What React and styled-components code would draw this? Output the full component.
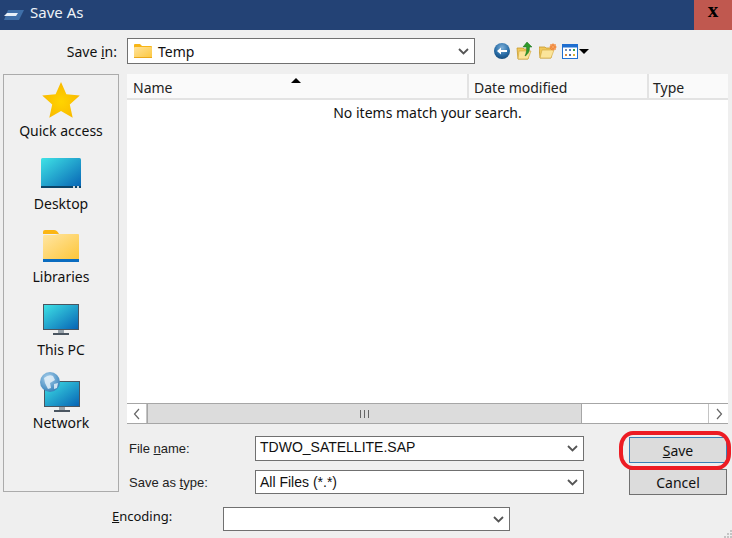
import React from 'react';
import styled, { createGlobalStyle } from 'styled-components';

const GlobalStyle = createGlobalStyle`
  html, body { margin: 0; padding: 0; background: #efefef; }
  body { font-family: "Noto Sans", "Open Sans", sans-serif; color: #111; overflow: hidden; }
`;

const Window = styled.div`
  position: relative;
  width: 732px;
  height: 538px;
  background: #efefef;
  overflow: hidden;
`;

const TitleBar = styled.div`
  display: flex;
  align-items: center;
  height: 30px;
  padding-left: 4px;
  background: #234275;
`;

const TitleText = styled.div`
  margin-left: 6px;
  margin-top: -6px;
  font-size: 15px;
  color: #eef2f7;
`;

const CloseButton = styled.div`
  display: flex;
  align-items: center;
  justify-content: center;
  width: 38px;
  height: 30px;
  margin-left: auto;
  padding-bottom: 9px;
  box-sizing: border-box;
  background: #c0584f;
  font-family: "Liberation Serif", serif;
  font-weight: 700;
  font-size: 21px;
  line-height: 1;
  color: #000;
`;

const Body = styled.div`
  padding: 8px 4px 0 3px;
`;

const TopRow = styled.div`
  display: flex;
  align-items: center;
  height: 26px;
  margin-bottom: 10px;
`;

const TopLabel = styled.div`
  width: 114px;
  text-align: right;
  font-size: 14px;
`;

const ComboBox = styled.div`
  display: flex;
  align-items: center;
  box-sizing: border-box;
  width: ${p => p.$width}px;
  height: ${p => p.$height}px;
  margin-left: ${p => p.$left || 0}px;
  padding: 0 ${p => p.$padRight || 4}px 0 ${p => p.$padLeft || 4}px;
  background: #fff;
  border: 1px solid #707070;
  font-family: ${p => p.$arial ? '"Liberation Sans", sans-serif' : 'inherit'};
  font-size: 14px;
`;

const ComboText = styled.span`
  flex: 1;
  white-space: nowrap;
  margin-top: ${p => p.$up ? -3 : 0}px;
`;

const Toolbar = styled.div`
  display: flex;
  align-items: center;
  gap: 5px;
  margin-left: 18px;
`;

const Main = styled.div`
  display: flex;
  gap: 8px;
`;

const Sidebar = styled.div`
  box-sizing: border-box;
  width: 116px;
  height: 418px;
  padding-top: 3px;
  border: 1px solid #ababab;
  background: #f0f0f0;
`;

const Place = styled.div`
  display: flex;
  flex-direction: column;
  align-items: center;
  height: 73px;
`;

const PlaceIcon = styled.div`
  display: flex;
  align-items: center;
  justify-content: center;
  height: 40px;
  margin-top: 2px;
`;

const PlaceLabel = styled.div`
  margin-top: 1px;
  font-size: 14px;
  line-height: 19px;
`;

const RightColumn = styled.div`
  flex: 1;
  min-width: 0;
`;

const FileList = styled.div`
  display: flex;
  flex-direction: column;
  height: 350px;
  background: #fff;
`;

const ListHeader = styled.div`
  display: flex;
  flex: none;
  height: 26px;
  box-sizing: border-box;
  border-bottom: 2px solid #e3e3e3;
  background: #e3e3e3;
  gap: 2px;
`;

const HeaderCell = styled.div`
  position: relative;
  display: flex;
  align-items: center;
  box-sizing: border-box;
  width: ${p => p.$width}px;
  padding-left: ${p => p.$pad}px;
  padding-top: 3px;
  background: #fafafa;
  font-size: 14px;
  color: #222;
`;

const SortArrow = styled.div`
  position: absolute;
  left: 164px;
  top: 4px;
  width: 0;
  height: 0;
  border-left: 5px solid transparent;
  border-right: 5px solid transparent;
  border-bottom: 5px solid #000;
`;

const EmptyNote = styled.div`
  flex: 1;
  padding-top: 3px;
  text-align: center;
  font-size: 14px;
  line-height: 19px;
`;

const ScrollBar = styled.div`
  display: flex;
  flex: none;
  height: 21px;
  box-sizing: border-box;
  border-top: 1px solid #a6a6a6;
  border-bottom: 1px solid #a6a6a6;
  background: #fff;
`;

const ScrollButton = styled.div`
  display: flex;
  align-items: center;
  justify-content: center;
  width: 20px;
  box-sizing: border-box;
  border-${p => p.$side}: 1px solid #c4c4c4;
`;

const ScrollThumb = styled.div`
  display: flex;
  align-items: center;
  justify-content: center;
  width: 435px;
  background: #dcdcdc;
  border-left: 1px solid #a6a6a6;
  border-right: 1px solid #a6a6a6;
  box-sizing: border-box;
`;

const Grip = styled.div`
  width: 9px;
  height: 8px;
  background: repeating-linear-gradient(90deg, #666 0 1px, transparent 1px 4px);
`;

const ScrollTrack = styled.div`
  flex: 1;
`;

const FormArea = styled.div`
  display: flex;
  margin-top: 12px;
`;

const Fields = styled.div`
  width: 457px;
  margin-right: 45px;
`;

const FieldRow = styled.div`
  display: flex;
  align-items: center;
  height: ${p => p.$height}px;
  margin-bottom: ${p => p.$gap || 0}px;
`;

const FieldLabel = styled.div`
  width: 128px;
  padding-left: 2px;
  box-sizing: border-box;
  font-family: "Liberation Sans", sans-serif;
  font-size: 13px;
  color: #222;
`;

const Actions = styled.div`
  position: relative;
  display: flex;
  flex-direction: column;
  gap: 6px;
  padding-top: 1px;
`;

const ActionButton = styled.div`
  display: flex;
  align-items: center;
  justify-content: center;
  box-sizing: border-box;
  width: 98px;
  height: ${p => p.$height}px;
  background: #dcdcdc;
  border: 1px solid ${p => p.$focus ? '#3a7fb5' : '#707070'};
  font-size: 14px;
`;

const Highlight = styled.div`
  position: absolute;
  left: -10px;
  top: -5px;
  width: 112px;
  height: 39px;
  box-sizing: border-box;
  border: 4px solid #ed1c24;
  border-radius: 14px / 16px;
`;

const EncodingRow = styled.div`
  display: flex;
  align-items: center;
  height: 24px;
  margin-top: 12px;
  padding-left: 109px;
`;

const EncodingLabel = styled.div`
  width: 111px;
  font-size: 13px;
  margin-top: -7px;
`;

const SizeGrip = styled.svg`
  position: absolute;
  right: 0;
  bottom: 0;
`;

const Chevron = () => (
  <svg width="11" height="7" viewBox="0 0 11 7">
    <path d="M1 1l4.5 4.5L10 1" fill="none" stroke="#555" strokeWidth="1.8" />
  </svg>
);

const AppIcon = () => (
  <svg width="20" height="10" viewBox="0 0 20 10">
    <path d="M4 0h16l-5 10H0z" fill="#3f6fa8" />
    <path d="M3 3h11l-2 3H0z" fill="#e8f0f8" />
  </svg>
);

const SmallFolder = () => (
  <svg width="18" height="14" viewBox="0 0 18 14" style={{ marginRight: 6 }}>
    <defs>
      <linearGradient id="sf" x1="0" y1="0" x2="1" y2="1">
        <stop offset="0" stopColor="#ffe29a" />
        <stop offset="1" stopColor="#fcc73e" />
      </linearGradient>
    </defs>
    <path d="M0 1q0-1 1-1h5l2 2h9q1 0 1 1v1H0z" fill="#f8b516" />
    <rect x="0" y="3" width="18" height="11" rx="1" fill="url(#sf)" />
    <rect x="0" y="13" width="18" height="1" fill="#eaa81c" />
  </svg>
);

const BackIcon = () => (
  <svg width="18" height="18" viewBox="0 0 18 18">
    <defs>
      <radialGradient id="bk" cx="0.5" cy="0.3" r="0.8">
        <stop offset="0" stopColor="#7fb0d8" />
        <stop offset="0.55" stopColor="#2a6ea8" />
        <stop offset="1" stopColor="#0f3f6c" />
      </radialGradient>
    </defs>
    <circle cx="9" cy="9" r="8" fill="url(#bk)" />
    <path d="M4 9l4-3.5V8h6v2H8v2.500z" fill="#fff" />
  </svg>
);

const FolderUpIcon = () => (
  <svg width="18" height="18" viewBox="0 0 18 18">
    <path d="M1 6h6l1 1h5l-1 10H2z" fill="#f0c75a" stroke="#c89a2c" strokeWidth="0.8" />
    <path d="M3 9h12l-3 8H2z" fill="#fbe49a" stroke="#d0a63a" strokeWidth="0.6" />
    <path d="M11 0l5 5h-2.500c0 4-1 7-4.500 9 1.300-3 2-6 1.500-9H7z" fill="#2e9a2a" stroke="#1d6f1c" strokeWidth="0.5" />
  </svg>
);

const NewFolderIcon = () => (
  <svg width="18" height="16" viewBox="0 0 18 16">
    <path d="M0 4h6l1 1h6l-1 10H1z" fill="#f0c75a" stroke="#c89a2c" strokeWidth="0.8" />
    <path d="M3 7h12l-3 8H1z" fill="#fbe49a" stroke="#d0a63a" strokeWidth="0.6" />
    <circle cx="14" cy="4" r="3" fill="#ef7b2d" />
    <path d="M14 0v8M10 4h8M11 1l6 6M17 1l-6 6" stroke="#f5a35f" strokeWidth="0.8" />
  </svg>
);

const ViewIcon = () => (
  <svg width="16" height="15" viewBox="0 0 16 15">
    <rect x="0.500" y="0.500" width="15" height="14" fill="#fff" stroke="#1f6fd0" />
    <rect x="0.500" y="0.500" width="15" height="3" fill="#1f6fd0" />
    <rect x="3" y="5" width="2" height="2" fill="#7a8fb0" />
    <rect x="7" y="5" width="2" height="2" fill="#5a7fc0" />
    <rect x="11" y="5" width="2" height="2" fill="#3aa04a" />
    <rect x="3" y="10" width="2" height="2" fill="#e08a3a" />
    <rect x="7" y="10" width="2" height="2" fill="#4a6fa8" />
    <rect x="11" y="10" width="2" height="2" fill="#e0b030" />
  </svg>
);

const MenuCaret = styled.div`
  width: 0;
  height: 0;
  margin-left: -4px;
  border-left: 5px solid transparent;
  border-right: 5px solid transparent;
  border-top: 5px solid #000;
`;

const StarIcon = () => (
  <svg width="38" height="38" viewBox="0 0 38 38">
    <defs>
      <radialGradient id="st" cx="0.5" cy="0.55" r="0.55">
        <stop offset="0" stopColor="#ffd400" />
        <stop offset="1" stopColor="#f9b800" />
      </radialGradient>
    </defs>
    <path d="M19 1l5.400 12.300 13.400 1.300-10 9 2.900 13.200L19 30l-11.700 6.800 2.900-13.200-10-9 13.400-1.300z" fill="url(#st)" />
  </svg>
);

const ScreenGradient = ({ id }) => (
  <linearGradient id={id} x1="0" y1="0" x2="1" y2="1">
    <stop offset="0" stopColor="#3fe3e6" />
    <stop offset="1" stopColor="#0662b4" />
  </linearGradient>
);

const DesktopIcon = () => (
  <svg width="40" height="30" viewBox="0 0 40 30">
    <defs><ScreenGradient id="dk" /></defs>
    <rect width="40" height="30" rx="1.500" fill="url(#dk)" />
    <rect y="28" width="40" height="2" fill="#0b4468" />
    <rect x="32" y="28" width="2" height="2" fill="#cfd8dc" />
    <rect x="36" y="28" width="2" height="2" fill="#cfd8dc" />
  </svg>
);

const LibraryIcon = () => (
  <svg width="36" height="32" viewBox="0 0 36 32">
    <defs>
      <linearGradient id="lb" x1="0" y1="0" x2="1" y2="1">
        <stop offset="0" stopColor="#ffe6a4" />
        <stop offset="1" stopColor="#fdc63a" />
      </linearGradient>
    </defs>
    <path d="M0 2q0-2 2-2h9q3 0 5 4H0z" fill="#fbb614" />
    <path d="M0 7q0-2 1-2l11 0 4-1h19q1 0 1 1v24H0z" fill="url(#lb)" />
    <rect y="29" width="36" height="3" fill="#0a6cc0" />
  </svg>
);

const Monitor = ({ id }) => (
  <svg x="0" y="0" width="36" height="31" viewBox="0 0 36 31">
    <defs><ScreenGradient id={id} /></defs>
    <rect x="0.500" y="0.500" width="35" height="25" fill={`url(#${id})`} stroke="#4a5560" />
    <rect x="15" y="26" width="6" height="3" fill="#9aa4ac" />
    <rect x="10" y="29" width="16" height="2" fill="#4a5560" />
  </svg>
);

const PcIcon = () => <Monitor id="pc" />;

const NetworkIcon = () => (
  <svg width="42" height="40" viewBox="0 0 42 40">
    <defs>
      <radialGradient id="gl" cx="0.4" cy="0.3" r="0.8">
        <stop offset="0" stopColor="#a8d0ec" />
        <stop offset="1" stopColor="#2a78b4" />
      </radialGradient>
    </defs>
    <svg x="4" y="9" width="36" height="31" viewBox="0 0 36 31">
      <defs><ScreenGradient id="nw" /></defs>
      <rect x="0.500" y="0.500" width="35" height="25" fill="url(#nw)" stroke="#4a5560" />
      <rect x="15" y="26" width="6" height="3" fill="#9aa4ac" />
      <rect x="10" y="29" width="16" height="2" fill="#4a5560" />
    </svg>
    <circle cx="10" cy="10" r="10" fill="url(#gl)" />
    <path d="M4 6q5-4 9-2l2 4-5 3 1 5-3 1-3-6zM14 12l4-1-1 5-3 1z" fill="#e4f0f8" opacity="0.85" />
  </svg>
);

const ScrollArrow = ({ d }) => (
  <svg width="8" height="12" viewBox="0 0 8 12">
    <path d={d} fill="none" stroke="#666" strokeWidth="1.200" />
  </svg>
);

const places = [
  { label: 'Quick access', icon: <StarIcon /> },
  { label: 'Desktop', icon: <DesktopIcon /> },
  { label: 'Libraries', icon: <LibraryIcon /> },
  { label: 'This PC', icon: <PcIcon /> },
  { label: 'Network', icon: <NetworkIcon /> },
];

const App = () => (
  <Window>
    <GlobalStyle />
    <TitleBar>
      <AppIcon />
      <TitleText>Save As</TitleText>
      <CloseButton>x</CloseButton>
    </TitleBar>
    <Body>
      <TopRow>
        <TopLabel>Save <u>i</u>n:</TopLabel>
        <ComboBox $width={348} $height={26} $left={10} $padLeft={6} $padRight={5}>
          <SmallFolder />
          <ComboText>Temp</ComboText>
          <Chevron />
        </ComboBox>
        <Toolbar>
          <BackIcon />
          <FolderUpIcon />
          <NewFolderIcon />
          <ViewIcon />
          <MenuCaret />
        </Toolbar>
      </TopRow>
      <Main>
        <Sidebar>
          {places.map(place => (
            <Place key={place.label}>
              <PlaceIcon>{place.icon}</PlaceIcon>
              <PlaceLabel>{place.label}</PlaceLabel>
            </Place>
          ))}
        </Sidebar>
        <RightColumn>
          <FileList>
            <ListHeader>
              <HeaderCell $width={340} $pad={6}>
                Name
                <SortArrow />
              </HeaderCell>
              <HeaderCell $width={178} $pad={5}>Date modified</HeaderCell>
              <HeaderCell $width={79} $pad={4}>Type</HeaderCell>
            </ListHeader>
            <EmptyNote>No items match your search.</EmptyNote>
            <ScrollBar>
              <ScrollButton $side="right">
                <ScrollArrow d="M6 1L1.500 6 6 11" />
              </ScrollButton>
              <ScrollThumb><Grip /></ScrollThumb>
              <ScrollTrack />
              <ScrollButton $side="left">
                <ScrollArrow d="M2 1l4.500 5L2 11" />
              </ScrollButton>
            </ScrollBar>
          </FileList>
          <FormArea>
            <Fields>
              <FieldRow $height={25} $gap={9}>
                <FieldLabel>File <u>n</u>ame:</FieldLabel>
                <ComboBox $width={329} $height={25} $arial $padRight={5}>
                  <ComboText $up>TDWO_SATELLITE.SAP</ComboText>
                  <Chevron />
                </ComboBox>
              </FieldRow>
              <FieldRow $height={24}>
                <FieldLabel>Save as <u>t</u>ype:</FieldLabel>
                <ComboBox $width={329} $height={24} $arial $padRight={5}>
                  <ComboText>All Files (*.*)</ComboText>
                  <Chevron />
                </ComboBox>
              </FieldRow>
            </Fields>
            <Actions>
              <Highlight />
              <ActionButton $focus $height={26}><span><u>S</u>ave</span></ActionButton>
              <ActionButton $height={26}>Cancel</ActionButton>
            </Actions>
          </FormArea>
        </RightColumn>
      </Main>
      <EncodingRow>
        <EncodingLabel><u>E</u>ncoding:</EncodingLabel>
        <ComboBox $width={287} $height={24} $padRight={5}>
          <ComboText />
          <Chevron />
        </ComboBox>
      </EncodingRow>
    </Body>
    <SizeGrip width="10" height="10" viewBox="0 0 10 10">
      <path d="M8 2h2v2H8zM5 5h2v2H5zM8 5h2v2H8zM2 8h2v2H2zM5 8h2v2H5zM8 8h2v2H8z" fill="#c4c4c4" />
    </SizeGrip>
  </Window>
);

export default App;
